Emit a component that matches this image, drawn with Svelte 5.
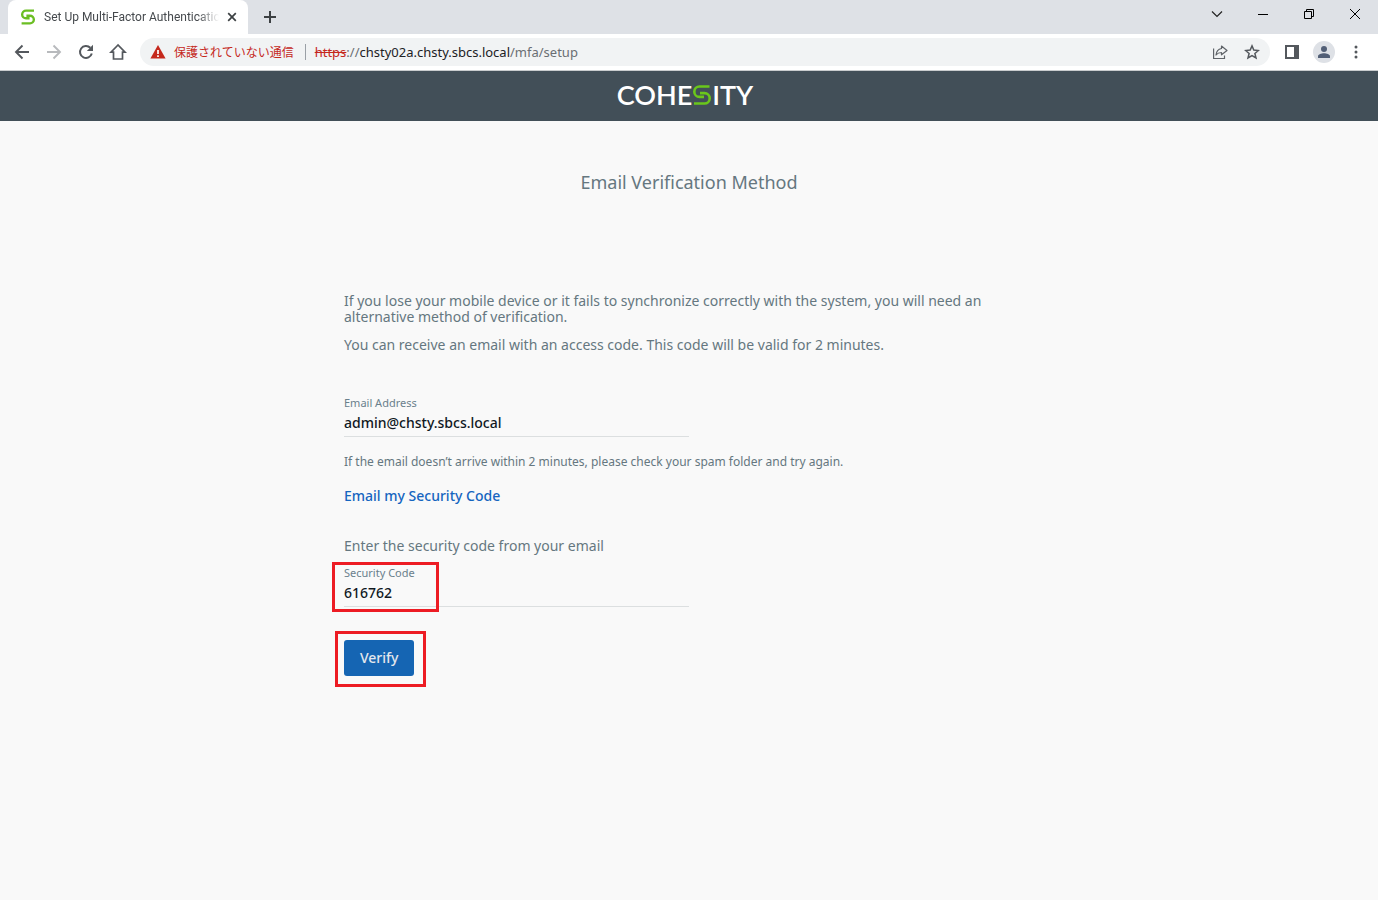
<script lang="ts">
	let email = $state('admin@chsty.sbcs.local');
	let code = $state('616762');
</script>

<div class="browser">
	<div class="tab-strip">
		<div class="tab">
			<svg class="favicon" viewBox="0 0 18 20" width="16" height="16" fill="none" stroke="#6bbe23" stroke-width="3">
				<path d="M16.500 2H6.500a4.800 4.800 0 0 0 0 9.600h4.500" />
				<path d="M1 18h10.500a4.800 4.800 0 0 0 0-9.600H7" />
			</svg>
			<span class="tab-title">Set Up Multi-Factor Authentication</span>
			<button type="button" class="icon tab-close" aria-label="Close tab">
				<svg viewBox="0 0 10 10" width="10" height="10"><path d="M1.200 1.200l7.600 7.600M8.800 1.200L1.200 8.800" stroke="#3c4043" stroke-width="1.700" /></svg>
			</button>
		</div>
		<button type="button" class="icon new-tab" aria-label="New tab">
			<svg viewBox="0 0 12 12" width="12" height="12"><path d="M6 0v12M0 6h12" stroke="#3c4043" stroke-width="2" /></svg>
		</button>
		<div class="window-controls">
			<button type="button" class="icon" aria-label="Search tabs">
				<svg viewBox="0 0 12 12" width="12" height="12" fill="none"><path d="M1 3.500l5 5 5-5" stroke="#222" stroke-width="1.200" /></svg>
			</button>
			<button type="button" class="icon" aria-label="Minimize">
				<svg viewBox="0 0 10 10" width="10" height="10"><path d="M0 5.500h10" stroke="#000" /></svg>
			</button>
			<button type="button" class="icon" aria-label="Restore">
				<svg viewBox="0 0 10 10" width="10" height="10" fill="none"><path d="M.5 2.500h7v7h-7zM2.500 2.500v-2h7v7h-2" stroke="#000" /></svg>
			</button>
			<button type="button" class="icon" aria-label="Close">
				<svg viewBox="0 0 10 10" width="10" height="10"><path d="M0 0l10 10M10 0L0 10" stroke="#000" /></svg>
			</button>
		</div>
	</div>

	<div class="toolbar">
		<button type="button" class="icon nav" aria-label="Back">
			<svg viewBox="0 0 16 16" width="16" height="16" fill="none"><path d="M15 8H2M8.500 1.500L2 8l6.500 6.500" stroke="#54585d" stroke-width="1.900" /></svg>
		</button>
		<button type="button" class="icon nav" aria-label="Forward">
			<svg viewBox="0 0 16 16" width="16" height="16" fill="none"><path d="M1 8h13M7.500 1.500L14 8l-6.500 6.500" stroke="#b8babd" stroke-width="1.900" /></svg>
		</button>
		<button type="button" class="icon nav" aria-label="Reload">
			<svg viewBox="0 0 16 16" width="16" height="16">
				<path d="M13.800 9.600A6 6 0 1 1 12.300 3.800" fill="none" stroke="#54585d" stroke-width="2" />
				<path d="M15 .8v6.200H8.800z" fill="#54585d" />
			</svg>
		</button>
		<button type="button" class="icon nav" aria-label="Home">
			<svg viewBox="0 0 18 18" width="18" height="18" fill="none"><path d="M9 2L2 9.200h2.500V16h9V9.200H16z" stroke="#54585d" stroke-width="1.700" /></svg>
		</button>
		<div class="address">
			<svg viewBox="0 0 16 14" width="16" height="14">
				<path d="M8 0l7.600 13.600H.4z" fill="#c5281c" />
				<path d="M8 5v4M8 10.300v1.700" stroke="#fff" stroke-width="1.700" />
			</svg>
			<span class="warning">保護されていない通信</span>
			<span class="url"><s>https</s>://<b>chsty02a.chsty.sbcs.local</b>/mfa/setup</span>
			<button type="button" class="icon" aria-label="Share">
				<svg viewBox="0 0 16 16" width="16" height="16" fill="none" stroke="#5f6368" stroke-width="1.200">
					<path d="M1.600 4.500v10h10.900v-3" />
					<path d="M9.500 2l5.500 4.500-5.500 4.300V8.500C7 8.500 5.300 9.300 4 11c.3-3.300 2-5.900 5.500-6.500z" stroke-linejoin="round" />
				</svg>
			</button>
			<button type="button" class="icon" aria-label="Bookmark this page">
				<svg viewBox="0 0 16 16" width="16" height="16" fill="none"><path d="M8 1.900l1.800 4.200 4.600.4-3.500 3 1.100 4.500L8 11.600 4 14l1.100-4.500-3.500-3 4.600-.4z" stroke="#54585d" stroke-width="1.500" /></svg>
			</button>
		</div>
		<button type="button" class="icon" aria-label="Side panel">
			<svg viewBox="0 0 14 14" width="14" height="14"><path d="M0 0h14v14H0z" fill="#54585d" /><path d="M2 2h7v10H2z" fill="#fff" /></svg>
		</button>
		<button type="button" class="icon avatar" aria-label="Profile">
			<svg viewBox="0 0 12 12" width="12" height="12" fill="#525f76"><circle cx="6" cy="3" r="3" /><path d="M0 12v-1.800C0 8.200 3.500 7.200 6 7.200s6 1 6 3V12z" /></svg>
		</button>
		<button type="button" class="icon menu" aria-label="Menu">
			<svg viewBox="0 0 4 14" width="4" height="14" fill="#54585d"><circle cx="2" cy="2" r="1.500" /><circle cx="2" cy="7" r="1.500" /><circle cx="2" cy="12" r="1.500" /></svg>
		</button>
	</div>
</div>

<header>
	<div class="logo" role="img" aria-label="Cohesity">
		<span>COHE</span>
		<svg viewBox="0 0 18 20" width="18" height="20" fill="none" stroke="#6ac71b" stroke-width="2.600">
			<path d="M16.500 1.500H6.500a5.200 5.200 0 0 0 0 10.400h4.500" />
			<path d="M1 18.500h10.500a5.200 5.200 0 0 0 0-10.400H7" />
		</svg>
		<span>ITY</span>
	</div>
</header>

<main>
	<h1>Email Verification Method</h1>

	<form onsubmit={(e) => e.preventDefault()}>
		<p>
			If you lose your mobile device or it fails to synchronize correctly with the system, you will need an
			alternative method of verification.
		</p>
		<p>You can receive an email with an access code. This code will be valid for 2 minutes.</p>

		<div class="field email">
			<label for="email">Email Address</label>
			<input id="email" type="email" bind:value={email} />
		</div>
		<p class="hint">If the email doesn’t arrive within 2 minutes, please check your spam folder and try again.</p>
		<a class="send-code" href="#send">Email my Security Code</a>

		<p class="prompt">Enter the security code from your email</p>
		<div class="field">
			<label for="code">Security Code</label>
			<input id="code" type="text" inputmode="numeric" bind:value={code} />
			<span class="mark mark-code"></span>
		</div>
		<div class="actions">
			<button type="submit" class="verify">Verify</button>
			<span class="mark mark-verify"></span>
		</div>
	</form>
</main>

<style>
	:global(body) {
		margin: 0;
		background: #f9f9f9;
		color: #657780;
		font: 14px/16px 'Noto Sans', sans-serif;
	}

	.browser {
		background: #fff;
		border-bottom: 1px solid #c9ccce;
	}

	.icon {
		display: inline-flex;
		align-items: center;
		justify-content: center;
		flex: none;
		border: none;
		background: none;
		padding: 0;
	}

	.tab-strip {
		display: flex;
		align-items: flex-start;
		height: 34px;
		padding-left: 8px;
		background: #dee1e6;
	}

	.tab {
		display: flex;
		align-items: center;
		box-sizing: border-box;
		width: 240px;
		height: 34px;
		padding: 0 11px 0 12px;
		border-radius: 8px 8px 0 0;
		background: #fff;
	}

	.tab-title {
		flex: 1;
		min-width: 0;
		margin: 0 8px;
		overflow: hidden;
		white-space: nowrap;
		font-family: Roboto, sans-serif;
		font-size: 12px;
		color: #45494d;
		mask-image: linear-gradient(to right, #000 88%, transparent);
	}

	.new-tab {
		width: 28px;
		height: 34px;
		margin-left: 8px;
	}

	.window-controls {
		display: flex;
		margin-left: auto;
	}

	.window-controls .icon {
		width: 46px;
		height: 28px;
	}

	.toolbar {
		display: flex;
		align-items: center;
		height: 36px;
		padding: 0 10px 0 6px;
	}

	.nav {
		width: 32px;
		height: 28px;
	}

	.address {
		display: flex;
		align-items: center;
		flex: 1;
		height: 28px;
		margin: 0 15px 0 6px;
		padding: 0 10px;
		border-radius: 14px;
		background: #f1f3f4;
		font-size: 13px;
	}

	.address .icon {
		margin-left: 16px;
	}

	.warning {
		margin: 0 11px 0 8px;
		font-family: 'Noto Sans CJK JP', sans-serif;
		font-size: 12px;
		color: #c5281c;
	}

	.url {
		flex: 1;
		padding-left: 9px;
		border-left: 1px solid #9aa0a6;
		color: #6a6e73;
	}

	.url s {
		color: #c5281c;
	}

	.url b {
		font-weight: normal;
		color: #202124;
	}

	.avatar {
		width: 22px;
		height: 22px;
		margin-left: 14px;
		border-radius: 50%;
		background: #dee1e6;
	}

	.menu {
		width: 24px;
		margin-left: 9px;
	}

	header {
		display: flex;
		justify-content: center;
		height: 50px;
		background: #424f58;
	}

	.logo {
		display: flex;
		align-items: center;
		gap: 1px;
		height: 48px;
		margin-right: 8px;
		color: #fff;
		font: 600 27px/32px Lato, sans-serif;
	}

	main {
		padding: 49px 24px;
	}

	h1 {
		margin: 0;
		font-size: 18px;
		line-height: 24px;
		font-weight: normal;
		text-align: center;
	}

	form {
		max-width: 690px;
		margin: 99px auto 0;
	}

	p {
		margin: 0 0 12px;
	}

	.field {
		position: relative;
		display: flex;
		flex-direction: column;
		width: 50%;
		padding-bottom: 4px;
		border-bottom: 1px solid #dcdfe0;
	}

	.email {
		margin-top: 42px;
	}

	label {
		font-size: 11px;
		color: #6a808c;
	}

	input {
		height: 20px;
		margin-top: 1px;
		padding: 0;
		border: none;
		outline: none;
		background: none;
		font: inherit;
		font-weight: 500;
		color: #10181f;
	}

	.hint {
		margin: 17px 0 18px;
		font-size: 12px;
	}

	.send-code {
		font-weight: 500;
		color: #1565c0;
		text-decoration: none;
	}

	.prompt {
		margin: 34px 0 11px;
	}

	.actions {
		position: relative;
		width: fit-content;
		margin-top: 33px;
	}

	.verify {
		display: block;
		height: 36px;
		padding: 0 16px;
		border: none;
		border-radius: 3px;
		background: #1565b3;
		color: #e4e8ed;
		font: inherit;
		font-weight: 500;
	}

	.mark {
		position: absolute;
		box-sizing: border-box;
		border: 3px solid #ed1c24;
		pointer-events: none;
	}

	.mark-code {
		top: -3px;
		left: -12px;
		width: 107px;
		height: 50px;
	}

	.mark-verify {
		inset: -9px -12px -11px -9px;
	}
</style>
